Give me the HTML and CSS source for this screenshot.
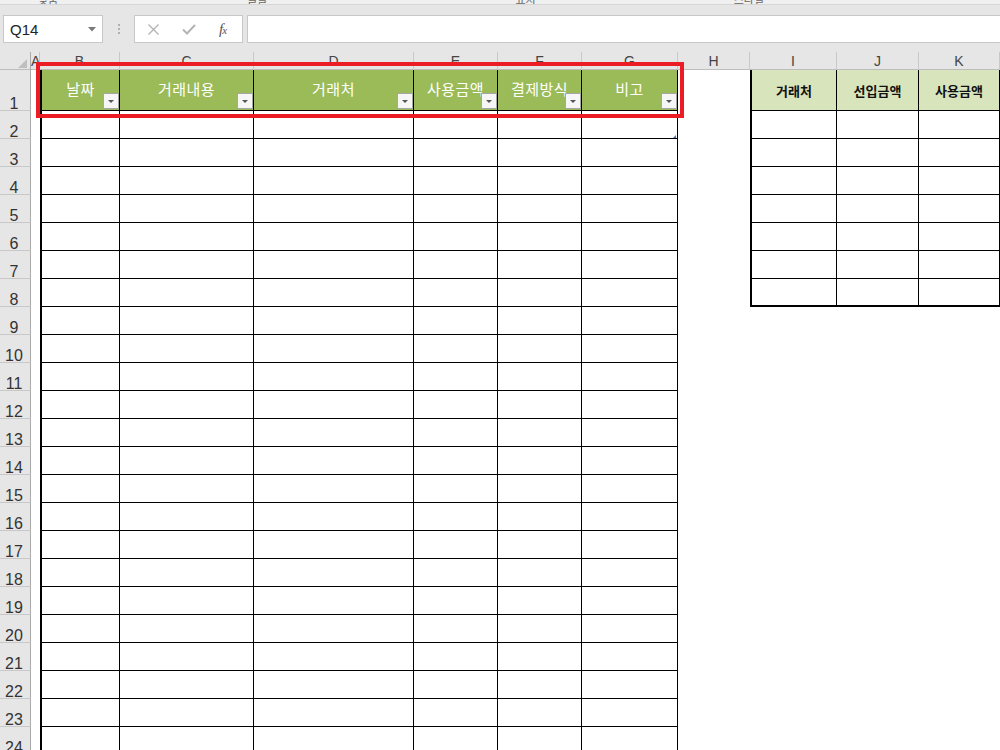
FILE: index.html
```html
<!DOCTYPE html>
<html lang="ko">
<head>
  <meta charset="UTF-8">
  <title>가계부 시트</title>
  <link rel="stylesheet" href="styles.css">
</head>
<body>
  <div class="ribbon-edge">
    <span class="rl-1">맞춤</span>
    <span class="rl-2">글꼴</span>
    <span class="rl-3">표시</span>
    <span class="rl-4">스타일</span>
  </div>

  <div class="formula-bar">
    <div class="name-box">
      <span>Q14</span>
      <svg width="8" height="5" viewBox="0 0 8 5"><path d="M0 0h8L4 4.5z" fill="#7a7a7a"/></svg>
    </div>
    <div class="grip"><i></i><i></i><i></i></div>
    <div class="fx-buttons">
      <svg width="11" height="11" viewBox="0 0 11 11"><path d="M0.5 0.5l10 10M10.5 0.5l-10 10" stroke="#b4b4b4" stroke-width="1.4" fill="none"/></svg>
      <svg width="14" height="11" viewBox="0 0 14 11"><path d="M1 5.5l4 4 8-8.5" stroke="#b4b4b4" stroke-width="2" fill="none"/></svg>
      <span class="fx">f<small>x</small></span>
    </div>
    <div class="formula-input"></div>
  </div>

  <div class="sheet">
    <div class="row col-heads">
      <div class="corner"><span class="select-all"></span></div>
      <div>A</div><div>B</div><div>C</div><div>D</div><div>E</div><div>F</div><div>G</div>
      <div>H</div><div>I</div><div>J</div><div>K</div>
    </div>

    <div class="row head">
      <div class="rh">1</div>
      <div></div>
      <div class="tbl-h">날짜<span class="filter"></span></div>
      <div class="tbl-h">거래내용<span class="filter"></span></div>
      <div class="tbl-h">거래처<span class="filter"></span></div>
      <div class="tbl-h">사용금액<span class="filter"></span></div>
      <div class="tbl-h">결제방식<span class="filter"></span></div>
      <div class="tbl-h">비고<span class="filter"></span></div>
      <div></div>
      <div class="side-h">거래처</div>
      <div class="side-h">선입금액</div>
      <div class="side-h">사용금액</div>
    </div>

    <div class="row side"><div class="rh">2</div><div></div><div></div><div></div><div></div><div></div><div></div><div class="resize"></div><div></div><div></div><div></div><div></div></div>
    <div class="row side"><div class="rh">3</div><div></div><div></div><div></div><div></div><div></div><div></div><div></div><div></div><div></div><div></div><div></div></div>
    <div class="row side"><div class="rh">4</div><div></div><div></div><div></div><div></div><div></div><div></div><div></div><div></div><div></div><div></div><div></div></div>
    <div class="row side"><div class="rh">5</div><div></div><div></div><div></div><div></div><div></div><div></div><div></div><div></div><div></div><div></div><div></div></div>
    <div class="row side"><div class="rh">6</div><div></div><div></div><div></div><div></div><div></div><div></div><div></div><div></div><div></div><div></div><div></div></div>
    <div class="row side"><div class="rh">7</div><div></div><div></div><div></div><div></div><div></div><div></div><div></div><div></div><div></div><div></div><div></div></div>
    <div class="row side last"><div class="rh">8</div><div></div><div></div><div></div><div></div><div></div><div></div><div></div><div></div><div></div><div></div><div></div></div>
    <div class="row"><div class="rh">9</div><div></div><div></div><div></div><div></div><div></div><div></div><div></div><div></div><div></div><div></div><div></div></div>
    <div class="row"><div class="rh">10</div><div></div><div></div><div></div><div></div><div></div><div></div><div></div><div></div><div></div><div></div><div></div></div>
    <div class="row"><div class="rh">11</div><div></div><div></div><div></div><div></div><div></div><div></div><div></div><div></div><div></div><div></div><div></div></div>
    <div class="row"><div class="rh">12</div><div></div><div></div><div></div><div></div><div></div><div></div><div></div><div></div><div></div><div></div><div></div></div>
    <div class="row"><div class="rh">13</div><div></div><div></div><div></div><div></div><div></div><div></div><div></div><div></div><div></div><div></div><div></div></div>
    <div class="row"><div class="rh">14</div><div></div><div></div><div></div><div></div><div></div><div></div><div></div><div></div><div></div><div></div><div></div></div>
    <div class="row"><div class="rh">15</div><div></div><div></div><div></div><div></div><div></div><div></div><div></div><div></div><div></div><div></div><div></div></div>
    <div class="row"><div class="rh">16</div><div></div><div></div><div></div><div></div><div></div><div></div><div></div><div></div><div></div><div></div><div></div></div>
    <div class="row"><div class="rh">17</div><div></div><div></div><div></div><div></div><div></div><div></div><div></div><div></div><div></div><div></div><div></div></div>
    <div class="row"><div class="rh">18</div><div></div><div></div><div></div><div></div><div></div><div></div><div></div><div></div><div></div><div></div><div></div></div>
    <div class="row"><div class="rh">19</div><div></div><div></div><div></div><div></div><div></div><div></div><div></div><div></div><div></div><div></div><div></div></div>
    <div class="row"><div class="rh">20</div><div></div><div></div><div></div><div></div><div></div><div></div><div></div><div></div><div></div><div></div><div></div></div>
    <div class="row"><div class="rh">21</div><div></div><div></div><div></div><div></div><div></div><div></div><div></div><div></div><div></div><div></div><div></div></div>
    <div class="row"><div class="rh">22</div><div></div><div></div><div></div><div></div><div></div><div></div><div></div><div></div><div></div><div></div><div></div></div>
    <div class="row"><div class="rh">23</div><div></div><div></div><div></div><div></div><div></div><div></div><div></div><div></div><div></div><div></div><div></div></div>
    <div class="row"><div class="rh">24</div><div></div><div></div><div></div><div></div><div></div><div></div><div></div><div></div><div></div><div></div><div></div></div>

    <div class="highlight"></div>
  </div>
</body>
</html>
```

FILE: styles.css
```css
html, body {
  margin: 0;
  height: 100%;
  overflow: hidden;
  background: #ffffff;
}

body {
  font-family: "Liberation Sans", "Noto Sans CJK KR", sans-serif;
  color: #222;
}

* {
  box-sizing: border-box;
}

:root {
  --cols: 31px 9px 80px 134px 160px 84px 84px 96px 72px 87px 82px 1fr;
  --head-gray: #e6e6e6;
  --line-gray: #c8c8c8;
  --table-green: #9bbb59;
  --side-green: #d8e4bc;
}

/* bottom edge of the ribbon, cut off */
.ribbon-edge {
  height: 5px;
  background: #f0f0f0;
  border-bottom: 1px solid #d6d6d6;
  display: flex;
  align-items: flex-end;
  overflow: hidden;
  font-family: "Noto Sans CJK KR", sans-serif;
  font-size: 11px;
  line-height: 14px;
  color: #666;
}

.ribbon-edge span {
  flex: none;
  margin-bottom: -2px;
}

.rl-1 { margin-left: 38px; }
.rl-2 { margin-left: 189px; }
.rl-3 { margin-left: 248px; }
.rl-4 { margin-left: 198px; }

/* formula bar */
.formula-bar {
  height: 47px;
  background: var(--head-gray);
  display: flex;
  align-items: flex-start;
  padding-top: 10px;
}

.name-box {
  width: 100px;
  height: 28px;
  margin-left: 3px;
  background: #fff;
  border: 1px solid var(--line-gray);
  display: flex;
  align-items: center;
  justify-content: space-between;
  padding: 0 6px 0 6px;
  font-size: 15px;
  color: #222;
}

.grip {
  width: 31px;
  height: 28px;
  display: flex;
  flex-direction: column;
  align-items: center;
  justify-content: center;
  gap: 2px;
}

.grip i {
  width: 2px;
  height: 2px;
  background: #b0b0b0;
}

.fx-buttons {
  width: 109px;
  height: 28px;
  background: #fff;
  border: 1px solid var(--line-gray);
  display: flex;
  align-items: center;
  padding-left: 13px;
  gap: 23px;
}

.fx {
  font-family: "Liberation Serif", serif;
  font-style: italic;
  font-size: 15px;
  color: #555;
  letter-spacing: -1px;
}

.fx small {
  font-size: 11px;
}

.formula-input {
  flex: 1;
  height: 28px;
  margin-left: 4px;
  background: #fff;
  border: 1px solid var(--line-gray);
  border-right: none;
}

/* sheet grid */
.sheet {
  position: relative;
}

.row {
  display: grid;
  grid-template-columns: var(--cols);
  height: 28px;
}

.col-heads {
  height: 18px;
  background: var(--head-gray);
  border-bottom: 1px solid #bdbdbd;
}

.col-heads div {
  border-right: 1px solid var(--line-gray);
  text-align: center;
  font-size: 14px;
  line-height: 18px;
  color: #444;
}

.col-heads .corner {
  border-right: 1px solid #ababab;
  display: flex;
  align-items: flex-end;
  justify-content: flex-end;
  padding: 0 3px 2px 0;
}

.select-all {
  width: 0;
  height: 0;
  border-left: 9px solid transparent;
  border-bottom: 9px solid #bfbfbf;
}

.rh {
  background: var(--head-gray);
  border-right: 1px solid #ababab;
  border-bottom: 1px solid var(--line-gray);
  display: flex;
  align-items: flex-end;
  justify-content: center;
  padding: 0 2px 0 0;
  font-size: 16px;
  line-height: 13px;
  color: #333;
}

/* main table B..G */
.row > :nth-child(n+3):nth-child(-n+8) {
  border-right: 1px solid #000;
  border-bottom: 1px solid #000;
}

.row > :nth-child(3) {
  border-left: 2px solid #000;
}

.row > :nth-child(8) {
  border-right-width: 2px;
}

.col-heads > :nth-child(n+3):nth-child(-n+8) {
  border-right: 1px solid var(--line-gray);
  border-bottom: none;
}

.col-heads > :nth-child(3) {
  border-left: none;
}

.head {
  height: 41px;
}

.row > .tbl-h {
  position: relative;
  background: var(--table-green);
  border-bottom-color: #a7bfdc;
  display: flex;
  align-items: center;
  justify-content: center;
  padding-bottom: 3px;
  font-family: "Noto Sans CJK KR", sans-serif;
  font-size: 15px;
  line-height: 1;
  color: #fff;
  letter-spacing: 0.5px;
}

.filter {
  position: absolute;
  right: 0;
  bottom: 1px;
  width: 16px;
  height: 16px;
  border: 1px solid #a6a6a6;
  background: #f6f6f6;
  display: flex;
  align-items: center;
  justify-content: center;
}

.filter::after {
  content: "";
  border-left: 3px solid transparent;
  border-right: 3px solid transparent;
  border-top: 3px solid #555;
  margin-top: 1px;
}

/* table resize handle */
.resize {
  position: relative;
}

.resize::after {
  content: "";
  position: absolute;
  right: 1px;
  bottom: 0;
  border-left: 3px solid transparent;
  border-bottom: 3px solid #4472c4;
}

/* side table I..K */
.row.side > :nth-child(n+10),
.head > .side-h {
  border-right: 1px solid #000;
  border-bottom: 1px solid #000;
}

.row.side > :nth-child(10),
.head > .side-h:nth-child(10) {
  border-left: 2px solid #000;
}

.row.side.last > :nth-child(n+10) {
  border-bottom-width: 2px;
}

.side-h {
  background: var(--side-green);
  display: flex;
  align-items: center;
  justify-content: center;
  font-family: "Noto Sans CJK KR", sans-serif;
  font-size: 13px;
  line-height: 1;
  font-weight: bold;
  color: #111;
}

/* red annotation box */
.highlight {
  position: absolute;
  left: 36px;
  top: 10px;
  width: 648px;
  height: 56px;
  border: 4px solid #ec1c24;
  pointer-events: none;
}
```
